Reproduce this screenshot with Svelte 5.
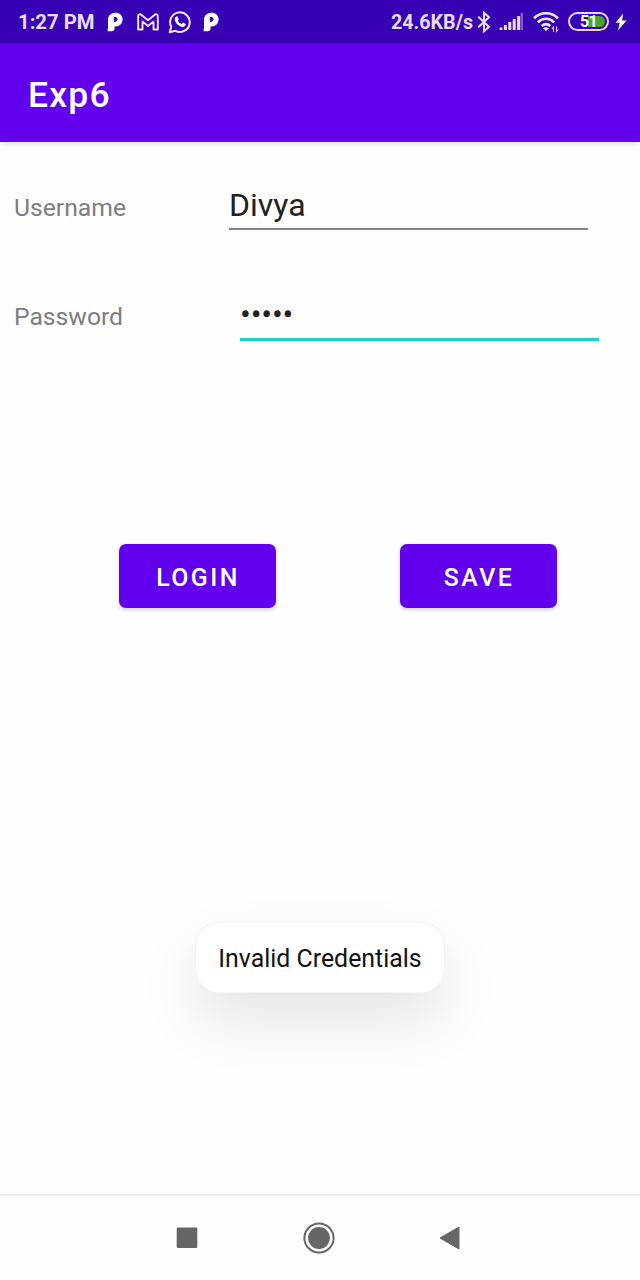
<script>
  const signal = [2.5, 5, 8, 11, 14];
</script>

{#snippet payIcon()}
  <svg class="pay" width="16" height="20" viewBox="0 0 16 20">
    <path fill="#fff" fill-rule="evenodd" d="M1 7.800C1 3.600 4 .7 8.300.7c4.400 0 7.300 2.700 7.300 6.700 0 4.100-3 7-6.900 7H7.500v2c0 1.700-.9 2.800-2.600 2.800H.5L1 15zM6.800 5.200v5l1.700-.5c1.300-.4 2-1.200 2-2.400 0-1.400-.9-2.300-2.200-2.300-.6 0-1.100.1-1.500.2z" />
  </svg>
{/snippet}

<main class="screen">
  <header class="status">
    <span class="time">1:27 PM</span>
    {@render payIcon()}
    <svg class="mail" width="22" height="18" viewBox="0 0 22 18">
      <path fill="none" stroke="#f0e4ff" stroke-width="1.900" stroke-linejoin="round" d="M1.200 3C1.200 1.200 3 .7 4.500 1.900L11 7.200l6.500-5.300c1.500-1.200 3.300-.7 3.300 1.100V16.500h-4.300V8.600L11 13 5.500 8.600v7.900H1.200z" />
    </svg>
    <svg class="chat" width="24" height="24" viewBox="0 0 24 24">
      <path fill="none" stroke="#f0e4ff" stroke-width="2" stroke-linejoin="round" d="M1.700 22.300l1.600-5.500A9.800 9.800 0 1 1 7.300 20.800z" />
      <path fill="#fff" d="M8.200 6.500c.6-.5 1.300-.3 1.600.4l.8 1.800c.2.500-.1.900-.9 1.700.9 1.700 2.200 2.900 3.900 3.600.9-1.100 1.200-1.400 1.700-1.200l1.900.9c.6.300.6.7.4 1.400-.4 1.400-1.800 2-3.100 1.900-3.900-.5-7.300-4-7.800-7.400-.1-1.300.6-2.400 1.500-3.100z" />
    </svg>
    {@render payIcon()}
    <span class="speed">24.6KB/s</span>
    <svg class="bluetooth" width="14" height="22" viewBox="0 0 14 22">
      <path fill="none" stroke="#eadcff" stroke-width="2" d="M1.200 5.800L12 15.800 7 20.300V1.700l5 4.500L1.200 16.200" />
    </svg>
    <svg class="signal" width="25" height="18" viewBox="0 0 25 18">
      {#each signal as height, i}
        <rect x={i * 4.4 + 0.5} y={17 - height} width="3" {height} rx=".5" fill="#eadcff" />
      {/each}
      <rect x="21.500" y="0" width="2.500" height="17" fill="#8058d7" />
    </svg>
    <svg class="wifi" width="26" height="22" viewBox="0 0 26 22">
      <g fill="none" stroke="#f0e4ff" stroke-width="2.600">
        <path d="M1 7.200C7.800.5 18.200.5 25 7.200" />
        <path d="M4.800 11.200c4.700-4.600 11.700-4.600 16.400 0" />
        <path d="M8.700 15c2.600-2.400 6-2.400 8.600 0" />
      </g>
      <path fill="#f0e4ff" d="M10 17.200q3-2.100 6 0l-3 2.800z" />
      <path fill="none" stroke="#d9c7ff" stroke-width="1.100" d="M20.500 21v-5l-1.700 2M23.500 15.500v5l1.700-2" />
    </svg>
    <div class="battery"><span>51</span></div>
    <svg class="bolt" width="12" height="18" viewBox="0 0 12 18">
      <path fill="#fff" d="M8.200.5L.5 9.800h4.200L3 17.500l8.500-10H7.100z" />
    </svg>
  </header>

  <div class="appbar"><h1>Exp6</h1></div>

  <section class="form">
    <div class="row">
      <span class="label">Username</span>
      <div class="field">Divya</div>
    </div>
    <div class="row second">
      <span class="label">Password</span>
      <div class="field active">•••••</div>
    </div>
    <div class="actions">
      <button>LOGIN</button>
      <button>SAVE</button>
    </div>
  </section>

  <div class="toast" role="status">Invalid Credentials</div>

  <nav>
    <svg width="22" height="22" viewBox="0 0 22 22"><rect x=".7" y=".5" width="20.600" height="20.600" rx="1" fill="#666" /></svg>
    <svg width="32" height="32" viewBox="0 0 32 32">
      <circle cx="16" cy="16" r="14.600" fill="none" stroke="#666" stroke-width="2" />
      <circle cx="16" cy="16" r="10.900" fill="#666" />
    </svg>
    <svg width="21" height="24" viewBox="0 0 21 24"><path fill="#666" stroke="#666" stroke-linejoin="round" d="M1 12L20 1v22z" /></svg>
  </nav>
</main>

<style>
  :global(body) { margin: 0; background: #fff; }
  .screen {
    width: 640px; height: 1280px; overflow: hidden;
    display: flex; flex-direction: column;
    background: #fefefe; font-family: Roboto, sans-serif;
  }
  svg { display: block; flex: none; }
  .status {
    box-sizing: border-box; height: 43px; flex: none;
    display: flex; align-items: center;
    padding-left: 18px; background: #3700b3; color: #eadcff;
    font-size: 20px; line-height: 24px; font-weight: 700; white-space: nowrap;
  }
  .time { width: 89px; font-size: 20.300px; }
  .mail { margin-left: 14px; }
  .chat { margin: 0 11px 0 9px; }
  .speed { width: 86px; margin: 2px 0 0 172px; font-size: 19.700px; }
  .bluetooth { margin-left: 0; }
  .signal { margin: 0 0 0 8px; }
  .wifi { margin-left: 9px; }
  .battery {
    box-sizing: border-box; width: 41px; height: 19px; margin-left: 9px;
    border: 2px solid #e5d6ff; border-radius: 10px; padding: 2px;
    display: flex; color: #fff; font-size: 16px; line-height: 12px; text-align: center; letter-spacing: -.8px;
  }
  .battery span { flex: 1; border-radius: 7px; background: linear-gradient(90deg, transparent 50%, #43a829 50%); }
  .bolt { margin-left: 6px; }
  .appbar {
    height: 99px; flex: none; display: flex; align-items: center;
    background: #6200ee; color: #fff; padding-left: 28px;
    box-shadow: 0 2px 7px rgba(0, 0, 0, .13);
  }
  h1 { margin: 5px 0 0; font-size: 35.500px; line-height: 42px; font-weight: 500; letter-spacing: 1.200px; }
  .form { flex: 1; padding: 42px 0 0 14px; }
  .row { display: flex; height: 47px; }
  .second { margin-top: 62px; }
  .label { width: 215px; padding-top: 9px; font-size: 24.700px; line-height: 29px; color: #7d7d7d; }
  .field {
    box-sizing: border-box; width: 359px; height: 46px; padding-top: 2px;
    border-bottom: 2px solid #858585; font-size: 32px; line-height: 38px; color: #212121;
  }
  .second .label { width: 226px; }
  .active { height: 48px; border-bottom: 3px solid #18d4c2; letter-spacing: -.15px; }
  .actions { display: flex; gap: 124px; margin: 204px 0 0 105px; }
  button {
    width: 157px; height: 64px; padding: 3px 0 0 1px; border: 0; border-radius: 7px;
    background: #6200ee; color: #fff; font: 500 24.890px Roboto, sans-serif; letter-spacing: 2.450px;
    box-shadow: 0 2px 4px rgba(0, 0, 0, .18);
  }
  .toast {
    box-sizing: border-box; width: 250px; height: 71px; margin: 0 auto 201px; padding-top: 1px;
    border: 1px solid #f2f2f2; border-radius: 24px; background: #fff; color: #111;
    font-size: 24.890px; line-height: 70px; text-align: center; white-space: nowrap;
    box-shadow: 0 28px 58px rgba(0, 0, 0, .1);
  }
  nav {
    box-sizing: border-box; height: 86px; flex: none; display: flex; align-items: center;
    padding: 0 180px 0 176px; border-top: 2px solid #eee; justify-content: space-between;
  }
</style>
